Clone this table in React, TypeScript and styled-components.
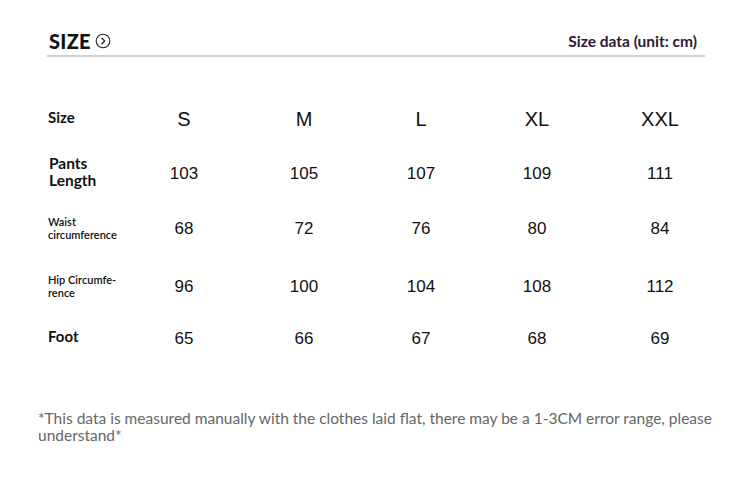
import React from 'react';
import styled, { createGlobalStyle } from 'styled-components';

const GlobalStyle = createGlobalStyle`
  html, body {
    margin: 0;
    padding: 0;
    background: #fff;
  }
  body {
    font-family: Lato, "Open Sans", sans-serif;
  }
`;

const sizes = ['S', 'M', 'L', 'XL', 'XXL'];

const rows = [
  { label: 'Pants\nLength', kind: 'big', height: 58, values: ['103', '105', '107', '109', '111'] },
  { label: 'Waist\ncircumference', kind: 'small', height: 52, values: ['68', '72', '76', '80', '84'] },
  { label: 'Hip Circumfe-\nrence', kind: 'small', height: 64, values: ['96', '100', '104', '108', '112'] },
  { label: 'Foot', kind: 'foot', height: 40, values: ['65', '66', '67', '68', '69'] }
];

function ArrowCircle() {
  return (
    <svg width="16" height="16" viewBox="0 0 16 16">
      <circle cx="8" cy="8" r="6.8" fill="none" stroke="#222" strokeWidth="1.1" />
      <path d="M6.6 4.8 L9.6 8 L6.6 11.2" fill="none" stroke="#222" strokeWidth="1.3" />
    </svg>
  );
}

export default function App() {
  return (
    <Page>
      <GlobalStyle />
      <Header>
        <Title>
          SIZE
          <ArrowCircle />
        </Title>
        <Unit>Size data (unit: cm)</Unit>
      </Header>

      <Table>
        <Row height={50}>
          <Label kind="head">Size</Label>
          {sizes.map((s) => (
            <HeadCell key={s}>{s}</HeadCell>
          ))}
        </Row>
        {rows.map((r) => (
          <Row key={r.label} height={r.height}>
            <Label kind={r.kind}>{r.label}</Label>
            {r.values.map((v, i) => (
              <Cell key={i}>{v}</Cell>
            ))}
          </Row>
        ))}
      </Table>

      <Note>
        *This data is measured manually with the clothes laid flat, there may be a 1-3CM error range, please
        understand*
      </Note>
    </Page>
  );
}

const Page = styled.div`
  width: 750px;
  height: 477px;
  box-sizing: border-box;
  padding-top: 28px;
  overflow: hidden;
`;

const Header = styled.div`
  margin: 0 45px 0 47px;
  height: 27px;
  border-bottom: 2px solid #d0d0d0;
  display: flex;
  justify-content: space-between;
  align-items: flex-start;
  padding: 0 8px 0 2px;
`;

const Title = styled.div`
  display: flex;
  align-items: center;
  gap: 4px;
  font-size: 20px;
  font-weight: 900;
  color: #111;
  letter-spacing: 0.3px;
  line-height: 26px;
`;

const Unit = styled.div`
  font-size: 15.5px;
  font-weight: 700;
  color: #2c1933;
  line-height: 26px;
`;

const Table = styled.div`
  margin-top: 37px;
  padding-left: 47px;
  display: flex;
  flex-direction: column;
`;

const Row = styled.div<{ height: number }>`
  display: grid;
  grid-template-columns: 77px 120px 120px 114px 118px 128px;
  align-items: center;
  height: ${(p) => p.height}px;
`;

const labelSize: Record<string, string> = {
  head: '15px',
  big: '15.5px',
  small: '11px',
  foot: '15px'
};

const Label = styled.div<{ kind: string }>`
  white-space: pre-line;
  color: #111;
  font-weight: ${(p) => (p.kind === 'small' ? 600 : 700)};
  font-size: ${(p) => labelSize[p.kind]};
  line-height: ${(p) => (p.kind === 'small' ? '13px' : '17px')};
  margin-top: ${(p) => (p.kind === 'small' ? '-1px' : '-3px')};
  padding-left: ${(p) => (p.kind === 'big' ? '2px' : '1px')};
`;

const HeadCell = styled.div`
  text-align: center;
  font-family: "Liberation Sans", Arial, sans-serif;
  font-size: 20px;
  color: #111;
`;

const Cell = styled.div`
  text-align: center;
  font-family: "Liberation Sans", Arial, sans-serif;
  font-size: 17px;
  color: #111;
  margin-top: 1px;
`;

const Note = styled.div`
  margin: 52px 30px 0 38px;
  font-size: 15.5px;
  line-height: 17px;
  color: #666;
`;
